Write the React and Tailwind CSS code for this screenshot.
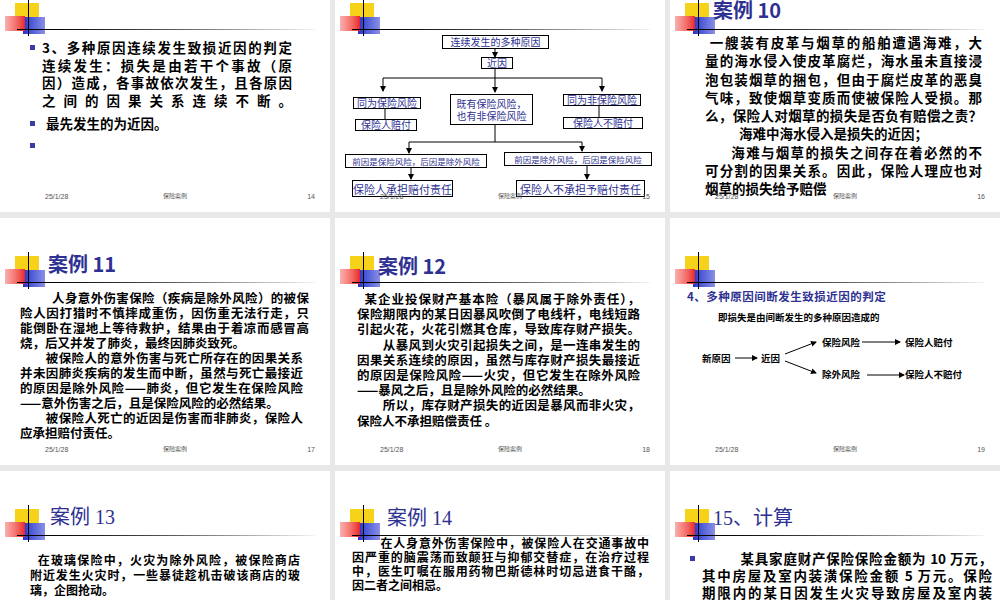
import React from "react";

const CJK = { fontFamily: '"Noto Sans CJK SC", sans-serif' };
const NAVY = "text-[#2e3192]";

function Logo() {
  return (
    <div className="absolute left-0 top-0 w-[330px] h-[80px] pointer-events-none">
      <div className="absolute left-[15px] top-[38px] w-[24px] h-[19px] bg-[#f7d21a]" />
      <div className="absolute left-[23px] top-[52px] w-[22px] h-[17px] bg-gradient-to-r from-[#2b2fc8] to-[#8c8fe8]" />
      <div className="absolute left-[5px] top-[51px] w-[20px] h-[15px] bg-gradient-to-r from-[#f8b0b0] to-[#e8202a]" />
      <div className="absolute left-[28px] top-[34px] w-[1px] h-[37px] bg-black" />
      <div className="absolute left-[17px] top-[64px] w-[298px] h-[1px] bg-gradient-to-r from-black via-[#555] to-[#f4f4f4]" />
    </div>
  );
}

function Slide({ n, children }) {
  return (
    <div className="relative w-[330px] h-[247px] bg-white flex flex-col overflow-hidden" style={CJK}>
      <Logo />
      <div className="relative flex-1 min-h-0">{children}</div>
      <div className="relative grid grid-cols-[1fr_1fr_1fr] items-center px-[45px] pb-[10px] text-[7px] text-[#555]" style={{ fontFamily: '"Liberation Sans", "Noto Sans CJK SC", sans-serif' }}>
        <span>25/1/28</span>
        <span className="text-center text-[6px] pl-[20px]">保险案例</span>
        <span className="text-right -mr-[30px]">{n}</span>
      </div>
    </div>
  );
}

function Title({ children, serif }) {
  return (
    <div className={`${NAVY} text-[20px] leading-[24px] ${serif ? "font-normal" : "font-bold"}`}
      style={serif ? { fontFamily: '"Liberation Serif", "Noto Sans CJK SC", serif' } : CJK}>
      {children}
    </div>
  );
}

function Bullet() {
  return <span className="inline-block w-[5px] h-[5px] bg-[#3b3ba8] mr-[7px] mt-[6px] shrink-0" />;
}

function Lines({ lines, cls }) {
  return (
    <div className={cls}>
      {lines.map((l, i) => (
        <div key={i} className="whitespace-pre" style={{ textAlignLast: "justify" }}>{l}</div>
      ))}
    </div>
  );
}

function Box({ x, y, w, h, children, small }) {
  return (
    <div className={`absolute border border-black bg-white ${NAVY} flex items-center justify-center whitespace-nowrap leading-[12px] text-center ${small ? "text-[8.5px]" : "text-[10px]"}`}
      style={{ left: x, top: y, width: w, height: h }}>
      {children}
    </div>
  );
}

function Arrow({ x1, y1, x2, y2 }) {
  return (
    <svg className="absolute left-0 top-0" width="330" height="247">
      <defs>
        <marker id="ah" markerWidth="6" markerHeight="6" refX="5" refY="3" orient="auto">
          <path d="M0,0 L6,3 L0,6 z" fill="#000" />
        </marker>
      </defs>
      <line x1={x1} y1={y1} x2={x2} y2={y2} stroke="#000" strokeWidth="1" markerEnd="url(#ah)" />
    </svg>
  );
}

function Line({ x1, y1, x2, y2 }) {
  return (
    <svg className="absolute left-0 top-0" width="330" height="247">
      <line x1={x1} y1={y1} x2={x2} y2={y2} stroke="#000" strokeWidth="1" />
    </svg>
  );
}

const body = "text-black font-semibold";

export default function App() {
  return (
    <div className="w-[1000px] h-[600px] overflow-hidden bg-[#e8e8e8]">
      <div className="-mt-[35px] grid grid-cols-[330px_330px_330px] gap-x-[5px] gap-y-[6px]">
        {/* 14 */}
        <Slide n="14">
          <div className={`pt-[74px] pl-[30px] w-[292px] text-[13.5px] leading-[17.5px] ${body}`}>
            <div className="flex"><Bullet /><Lines cls="flex-1" lines={["3、多种原因连续发生致损近因的判定", "连续发生：损失是由若干个事故（原", "因）造成，各事故依次发生，且各原因", "之间的因果关系连续不断。"]} /></div>
            <div className="flex mt-[6px]"><Bullet /><span className="pl-[4px]">最先发生的为近因。</span></div>
            <div className="flex mt-[4px]"><Bullet /></div>
          </div>
        </Slide>
        {/* 15 */}
        <Slide n="15">
          <div className="absolute inset-0">
            <Box x={107} y={70} w={107} h={14}>连续发生的多种原因</Box>
            <Arrow x1={160} y1={84} x2={160} y2={92} />
            <Box x={146} y={92} w={32} h={12}>近因</Box>
            <Line x1={160} y1={104} x2={160} y2={113} />
            <Line x1={48} y1={113} x2={267} y2={113} />
            <Arrow x1={48} y1={113} x2={48} y2={126} />
            <Arrow x1={160} y1={113} x2={160} y2={127} />
            <Arrow x1={267} y1={113} x2={267} y2={126} />
            <Box x={18} y={132} w={68} h={12}>同为保险风险</Box>
            <Line x1={50} y1={144} x2={50} y2={154} />
            <Box x={20} y={154} w={62} h={12}>保险人赔付</Box>
            <Box x={115} y={129} w={83} h={31}><span>既有保险风险，<br />也有非保险风险</span></Box>
            <Box x={228} y={129} w={78} h={12}>同为非保险风险</Box>
            <Line x1={264} y1={141} x2={264} y2={152} />
            <Box x={228} y={152} w={80} h={12}>保险人不赔付</Box>
            <Line x1={160} y1={160} x2={160} y2={177} />
            <Line x1={74} y1={177} x2={247} y2={177} />
            <Arrow x1={74} y1={177} x2={74} y2={188} />
            <Arrow x1={247} y1={177} x2={247} y2={186} />
            <Box x={10} y={189} w={142} h={14} small>前因是保险风险，后因是除外风险</Box>
            <Box x={169} y={187} w={148} h={14} small>前因是除外风险，后因是保险风险</Box>
            <Arrow x1={76} y1={203} x2={76} y2={214} />
            <Arrow x1={252} y1={201} x2={252} y2={214} />
            <Box x={17} y={215} w={101} h={17}><span className="text-[11px]">保险人承担赔付责任</span></Box>
            <Box x={181} y={215} w={129} h={17}><span className="text-[11px]">保险人不承担予赔付责任</span></Box>
          </div>
        </Slide>
        {/* 16 */}
        <Slide n="16">
          <div className="pt-[33px] pl-[43px]"><Title>案例 10</Title></div>
          <Lines cls={`pt-[11px] pl-[35px] w-[312px] text-[13.5px] leading-[18.3px] ${body}`} lines={[
            " 一艘装有皮革与烟草的船舶遭遇海难，大",
            "量的海水侵入使皮革腐烂，海水虽未直接浸",
            "泡包装烟草的捆包，但由于腐烂皮革的恶臭",
            "气味，致使烟草变质而使被保险人受损。那",
            "么，保险人对烟草的损失是否负有赔偿之责？",
          ]} />
          <div className={`pl-[69px] text-[13.5px] leading-[18.3px] ${body}`}>海难中海水侵入是损失的近因；</div>
          <Lines cls={`pl-[35px] w-[312px] text-[13.5px] leading-[18.3px] ${body}`} lines={[
            "      海难与烟草的损失之间存在着必然的不",
            "可分割的因果关系。因此，保险人理应也对",
          ]} />
          <div className={`pl-[35px] text-[13.5px] leading-[18.3px] ${body}`}>烟草的损失给予赔偿</div>
        </Slide>
        {/* 17 */}
        <Slide n="17">
          <div className="pt-[34px] pl-[48px]"><Title>案例 11</Title></div>
          <Lines cls={`pt-[14px] pl-[20px] w-[309px] text-[12.5px] leading-[15px] ${body}`} lines={[
            "          人身意外伤害保险（疾病是除外风险）的被保",
            "险人因打猎时不慎摔成重伤，因伤重无法行走，只",
            "能倒卧在湿地上等待救护，结果由于着凉而感冒高",
          ]} />
          <div className={`pl-[20px] text-[12.5px] leading-[15px] ${body}`}>烧，后又并发了肺炎，最终因肺炎致死。</div>
          <Lines cls={`pl-[20px] w-[303px] text-[12.5px] leading-[15px] ${body}`} lines={[
            "        被保险人的意外伤害与死亡所存在的因果关系",
            "并未因肺炎疾病的发生而中断，虽然与死亡最接近",
            "的原因是除外风险——肺炎，但它发生在保险风险",
          ]} />
          <div className={`pl-[20px] text-[12.5px] leading-[15px] ${body}`}>——意外伤害之后，且是保险风险的必然结果。</div>
          <Lines cls={`pl-[20px] w-[303px] text-[12.5px] leading-[15px] ${body}`} lines={["        被保险人死亡的近因是伤害而非肺炎，保险人"]} />
          <div className={`pl-[20px] text-[12.5px] leading-[15px] ${body}`}>应承担赔付责任。</div>
        </Slide>
        {/* 18 */}
        <Slide n="18">
          <div className="pt-[36px] pl-[43px]"><Title>案例 12</Title></div>
          <Lines cls={`pt-[13px] pl-[22px] w-[305px] text-[12.5px] leading-[15.2px] ${body}`} lines={[
            "  某企业投保财产基本险（暴风属于除外责任），",
            "保险期限内的某日因暴风吹倒了电线杆，电线短路",
            "引起火花，火花引燃其仓库，导致库存财产损失。",
            "        从暴风到火灾引起损失之间，是一连串发生的",
            "因果关系连续的原因，虽然与库存财产损失最接近",
            "的原因是保险风险——火灾，但它发生在除外风险",
          ]} />
          <div className={`pl-[22px] text-[12.5px] leading-[15.2px] ${body}`}>——暴风之后，且是除外风险的必然结果。</div>
          <Lines cls={`pl-[22px] w-[305px] text-[12.5px] leading-[15.2px] ${body}`} lines={["        所以，库存财产损失的近因是暴风而非火灾，"]} />
          <div className={`pl-[22px] text-[12.5px] leading-[15.2px] ${body}`}>保险人不承担赔偿责任 。</div>
        </Slide>
        {/* 19 */}
        <Slide n="19">
          <div className="absolute inset-0 font-semibold">
            <div className={`absolute left-[17px] top-[70px] text-[11.5px] tracking-[0.5px] ${NAVY}`}>4、多种原因间断发生致损近因的判定</div>
            <div className="absolute left-[48px] top-[92px] text-[9.5px] text-black">即损失是由间断发生的多种原因造成的</div>
            <div className="absolute left-[32px] top-[133px] text-[9.5px]">新原因</div>
            <Arrow x1={65} y1={140} x2={87} y2={140} />
            <div className="absolute left-[91px] top-[133px] text-[9.5px]">近因</div>
            <Arrow x1={115} y1={136} x2={146} y2={124} />
            <Arrow x1={115} y1={143} x2={146} y2={155} />
            <div className="absolute left-[152px] top-[117px] text-[9.5px]">保险风险</div>
            <Arrow x1={192} y1={124} x2={230} y2={124} />
            <div className="absolute left-[235px] top-[117px] text-[9.5px]">保险人赔付</div>
            <div className="absolute left-[152px] top-[149px] text-[9.5px]">除外风险</div>
            <Arrow x1={197} y1={157} x2={234} y2={157} />
            <div className="absolute left-[235px] top-[149px] text-[9.5px]">保险人不赔付</div>
          </div>
        </Slide>
        {/* row 3 */}
        <Slide n="20">
          <div className="pt-[34px] pl-[50px]"><Title serif>案例 13</Title></div>
          <Lines cls={`pt-[23px] pl-[30px] w-[300px] text-[12px] leading-[15px] ${body}`} lines={[
            "  在玻璃保险中，火灾为除外风险，被保险商店",
            "附近发生火灾时，一些暴徒趁机击破该商店的玻",
          ]} />
          <div className={`pl-[30px] text-[12px] leading-[15px] ${body}`}>璃，企图抢动。</div>
        </Slide>
        <Slide n="21">
          <div className="pt-[35px] pl-[52px]"><Title serif>案例 14</Title></div>
          <Lines cls={`pt-[6px] pl-[17px] w-[314px] text-[12px] leading-[14px] ${body}`} lines={[
            "        在人身意外伤害保险中，被保险人在交通事故中",
            "因严重的脑震荡而致颠狂与抑郁交替症，在治疗过程",
            "中，医生叮嘱在服用药物巴斯德林时切忌进食干酪，",
          ]} />
          <div className={`pl-[17px] text-[12px] leading-[14px] ${body}`}>因二者之间相忌。</div>
        </Slide>
        <Slide n="22">
          <div className="pt-[35px] pl-[43px]"><Title serif>15、计算</Title></div>
          <div className={`pt-[20px] pl-[20px] text-[13.5px] leading-[17px] ${body}`}>
            <div className="flex"><Bullet /><Lines cls="w-[290px]" lines={[
              "          某具家庭财产保险保险金额为 10 万元，",
              "其中房屋及室内装潢保险金额 5 万元。保险",
              "期限内的某日因发生火灾导致房屋及室内装",
            ]} /></div>
          </div>
        </Slide>
      </div>
    </div>
  );
}
